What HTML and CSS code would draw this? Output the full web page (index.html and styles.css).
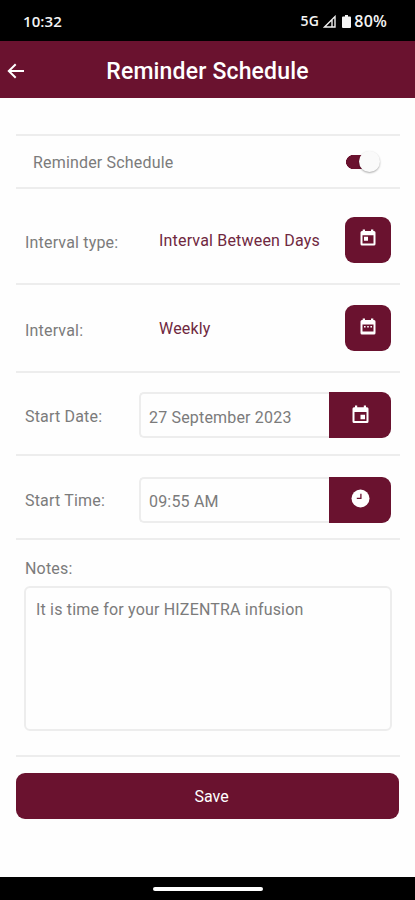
FILE: index.html
```html
<!DOCTYPE html>
<html lang="en">
<head>
<meta charset="utf-8">
<title>Reminder Schedule</title>
<link rel="stylesheet" href="styles.css">
</head>
<body>
<div class="status">
  <span class="clock">10:32</span>
  <span class="network">5G</span>
  <svg class="signal" width="13" height="13" viewBox="0 0 13 13"><path d="M1.6 12H12V1.6ZM9 4.5V12" fill="none" stroke="#eee" stroke-width="1.4"/></svg>
  <svg class="battery" width="9" height="13" viewBox="0 0 9 13"><path d="M3 0H6V1.4H8Q9 1.4 9 2.4V12Q9 13 8 13H1Q0 13 0 12V2.4Q0 1.4 1 1.4H3Z" fill="#f4f4f4"/></svg>
  <span class="charge">80%</span>
</div>
<header class="appbar">
  <svg class="back" width="18" height="16" viewBox="0 0 18 16"><path d="M17 8H2M8.7 1.2L1.8 8L8.7 14.8" fill="none" stroke="#fff" stroke-width="2"/></svg>
  <h1>Reminder Schedule</h1>
</header>
<main>
  <section class="row toggle-row">
    <span class="label">Reminder Schedule</span>
    <span class="switch"><span class="knob"></span></span>
  </section>
  <section class="row type-row">
    <span class="label low">Interval type:</span>
    <span class="value">Interval Between Days</span>
    <button class="square"><svg width="16" height="18" viewBox="0 0 16 18"><path fill="#fff" fill-rule="evenodd" d="M2 2H2.7V.5H5V2H11V.5H13.3V2H14Q15.5 2 15.5 3.5V15Q15.5 16.5 14 16.5H2Q.5 16.5 .5 15V3.5Q.5 2 2 2ZM2.5 6.2V14.5H13.5V6.2ZM4 7.7H8V11.7H4Z"/></svg></button>
  </section>
  <section class="row interval-row">
    <span class="label low">Interval:</span>
    <span class="value">Weekly</span>
    <button class="square"><svg width="16" height="18" viewBox="0 0 16 18"><path fill="#fff" fill-rule="evenodd" d="M2 2H2.7V.5H5V2H11V.5H13.3V2H14Q15.5 2 15.5 3.5V15Q15.5 16.5 14 16.5H2Q.5 16.5 .5 15V3.5Q.5 2 2 2ZM2.5 6.5V13.5H13.5V6.5ZM4 8H5.6V9.6H4ZM7.2 8H8.8V9.6H7.2ZM10.4 8H12V9.6H10.4Z"/></svg></button>
  </section>
  <section class="row date-row">
    <span class="label">Start Date:</span>
    <div class="field"><span class="date">27 September 2023</span><button><svg width="17" height="19" viewBox="0 0 17 19"><path fill="#fff" fill-rule="evenodd" d="M2 2.2H3V.5H5.2V2.2H11.8V.5H14V2.2H15Q16.5 2.2 16.5 3.7V16.5Q16.5 18 15 18H2Q.5 18 .5 16.5V3.7Q.5 2.2 2 2.2ZM2.5 7V16H14.5V7ZM8.5 9.8H13V14.3H8.5Z"/></svg></button></div>
  </section>
  <section class="row time-row">
    <span class="label">Start Time:</span>
    <div class="field"><span class="time">09:55 AM</span><button><svg width="19" height="19" viewBox="0 0 19 19"><circle cx="9.5" cy="9.5" r="9" fill="#fff"/><path d="M9.9 4.8V9.4H5.8" fill="none" stroke="#6a122f" stroke-width="1.3"/></svg></button></div>
  </section>
  <section class="notes">
    <span class="label notes-label">Notes:</span>
    <div class="note-box"><span>It is time for your HIZENTRA infusion</span></div>
  </section>
  <button class="save"><span>Save</span></button>
</main>
<footer><span class="pill"></span></footer>
</body>
</html>
```
FILE: styles.css
```css
* { box-sizing: border-box; }
body {
  margin: 0;
  width: 415px;
  height: 900px;
  display: flex;
  flex-direction: column;
  overflow: hidden;
  background: #fefefe;
  color: #7b7b7b;
  font: 16px/20px Roboto, sans-serif;
}
button { border: 0; padding: 0; font: inherit; background: #6a122f; color: #fff; display: flex; align-items: center; justify-content: center; }
svg { display: block; flex: none; }
span { white-space: nowrap; }
.status {
  height: 41px;
  flex: none;
  display: flex;
  align-items: center;
  padding: 1px 28px 0 23px;
  background: #000;
  color: #f4f4f4;
  font: 600 15px/18px "Open Sans", sans-serif;
}
.clock { margin-right: auto; letter-spacing: .1px; }
.network { font-size: 14px; letter-spacing: .3px; }
.signal { margin: 0 6px 0 4px; }
.battery { margin-right: 3px; }
.charge { font-size: 16px; letter-spacing: .2px; }
.appbar {
  position: relative;
  height: 57px;
  flex: none;
  display: flex;
  align-items: center;
  justify-content: center;
  background: #6a122f;
  color: #fff;
}
.back { position: absolute; left: 7px; top: 22px; }
h1 { margin: 5px 0 0; font-size: 23px; line-height: 28px; font-weight: 500; letter-spacing: .17px; }
main { flex: 1; padding: 36px 15px 0 16px; }
.label, .value, .date, .time, .note-box { letter-spacing: .18px; }
.row { display: flex; align-items: center; border-bottom: 2px solid #ededed; padding: 0 9px; }
.toggle-row { height: 55px; border-top: 2px solid #ededed; padding: 0 20px 0 17px; justify-content: space-between; }
.switch { width: 34px; height: 22px; display: flex; align-items: center; justify-content: flex-end; background: radial-gradient(circle at 7px 11px, #6a122f 6.7px, transparent 7.2px), linear-gradient(#6a122f, #6a122f) 7px 50% / 18px 14px no-repeat; }
.knob { width: 21px; height: 21px; border-radius: 50%; background: #fafafa; box-shadow: 0 1px 2px #0005; }
.toggle-row .label { padding-top: 2px; }
.type-row { height: 96px; padding-top: 7px; }
.interval-row { height: 88px; }
.date-row { height: 83px; padding-top: 3px; }
.time-row { height: 84px; padding-top: 5px; }
.row .label { width: 114px; }
.toggle-row .label { width: auto; }
.low { padding-top: 6px; }
.value { margin-left: 20px; flex: 1; color: #6f2840; padding-top: 2px; }
.square { width: 46px; height: 46px; border-radius: 9px; padding-bottom: 3px; }
.date-row .label { padding-top: 3px; }
.time-row .label { padding-top: 2px; }
.field { flex: 1; height: 46px; display: flex; align-items: center; border: 2px solid #ededed; border-right: 0; border-radius: 5px 9px 9px 5px; padding-left: 8px; }
.field span { padding-top: 5px; }
.field button { width: 62px; height: 46px; margin: -2px 0 -2px auto; border-radius: 0 9px 9px 0; padding-bottom: 2px; }
.notes { height: 217px; border-bottom: 2px solid #ededed; padding: 19px 8px 0; }
.notes-label { display: block; padding-left: 1px; }
.note-box { height: 145px; margin-top: 7px; border: 2px solid #ededed; border-radius: 6px; padding: 12px 10px; }
.save { width: 383px; height: 46px; margin-top: 16px; border-radius: 9px; padding: 2px 0 0 8px; }
footer { height: 23px; flex: none; background: #000; display: flex; justify-content: center; padding-top: 10px; }
.pill { width: 110px; height: 4px; border-radius: 2px; background: #fff; }
```
